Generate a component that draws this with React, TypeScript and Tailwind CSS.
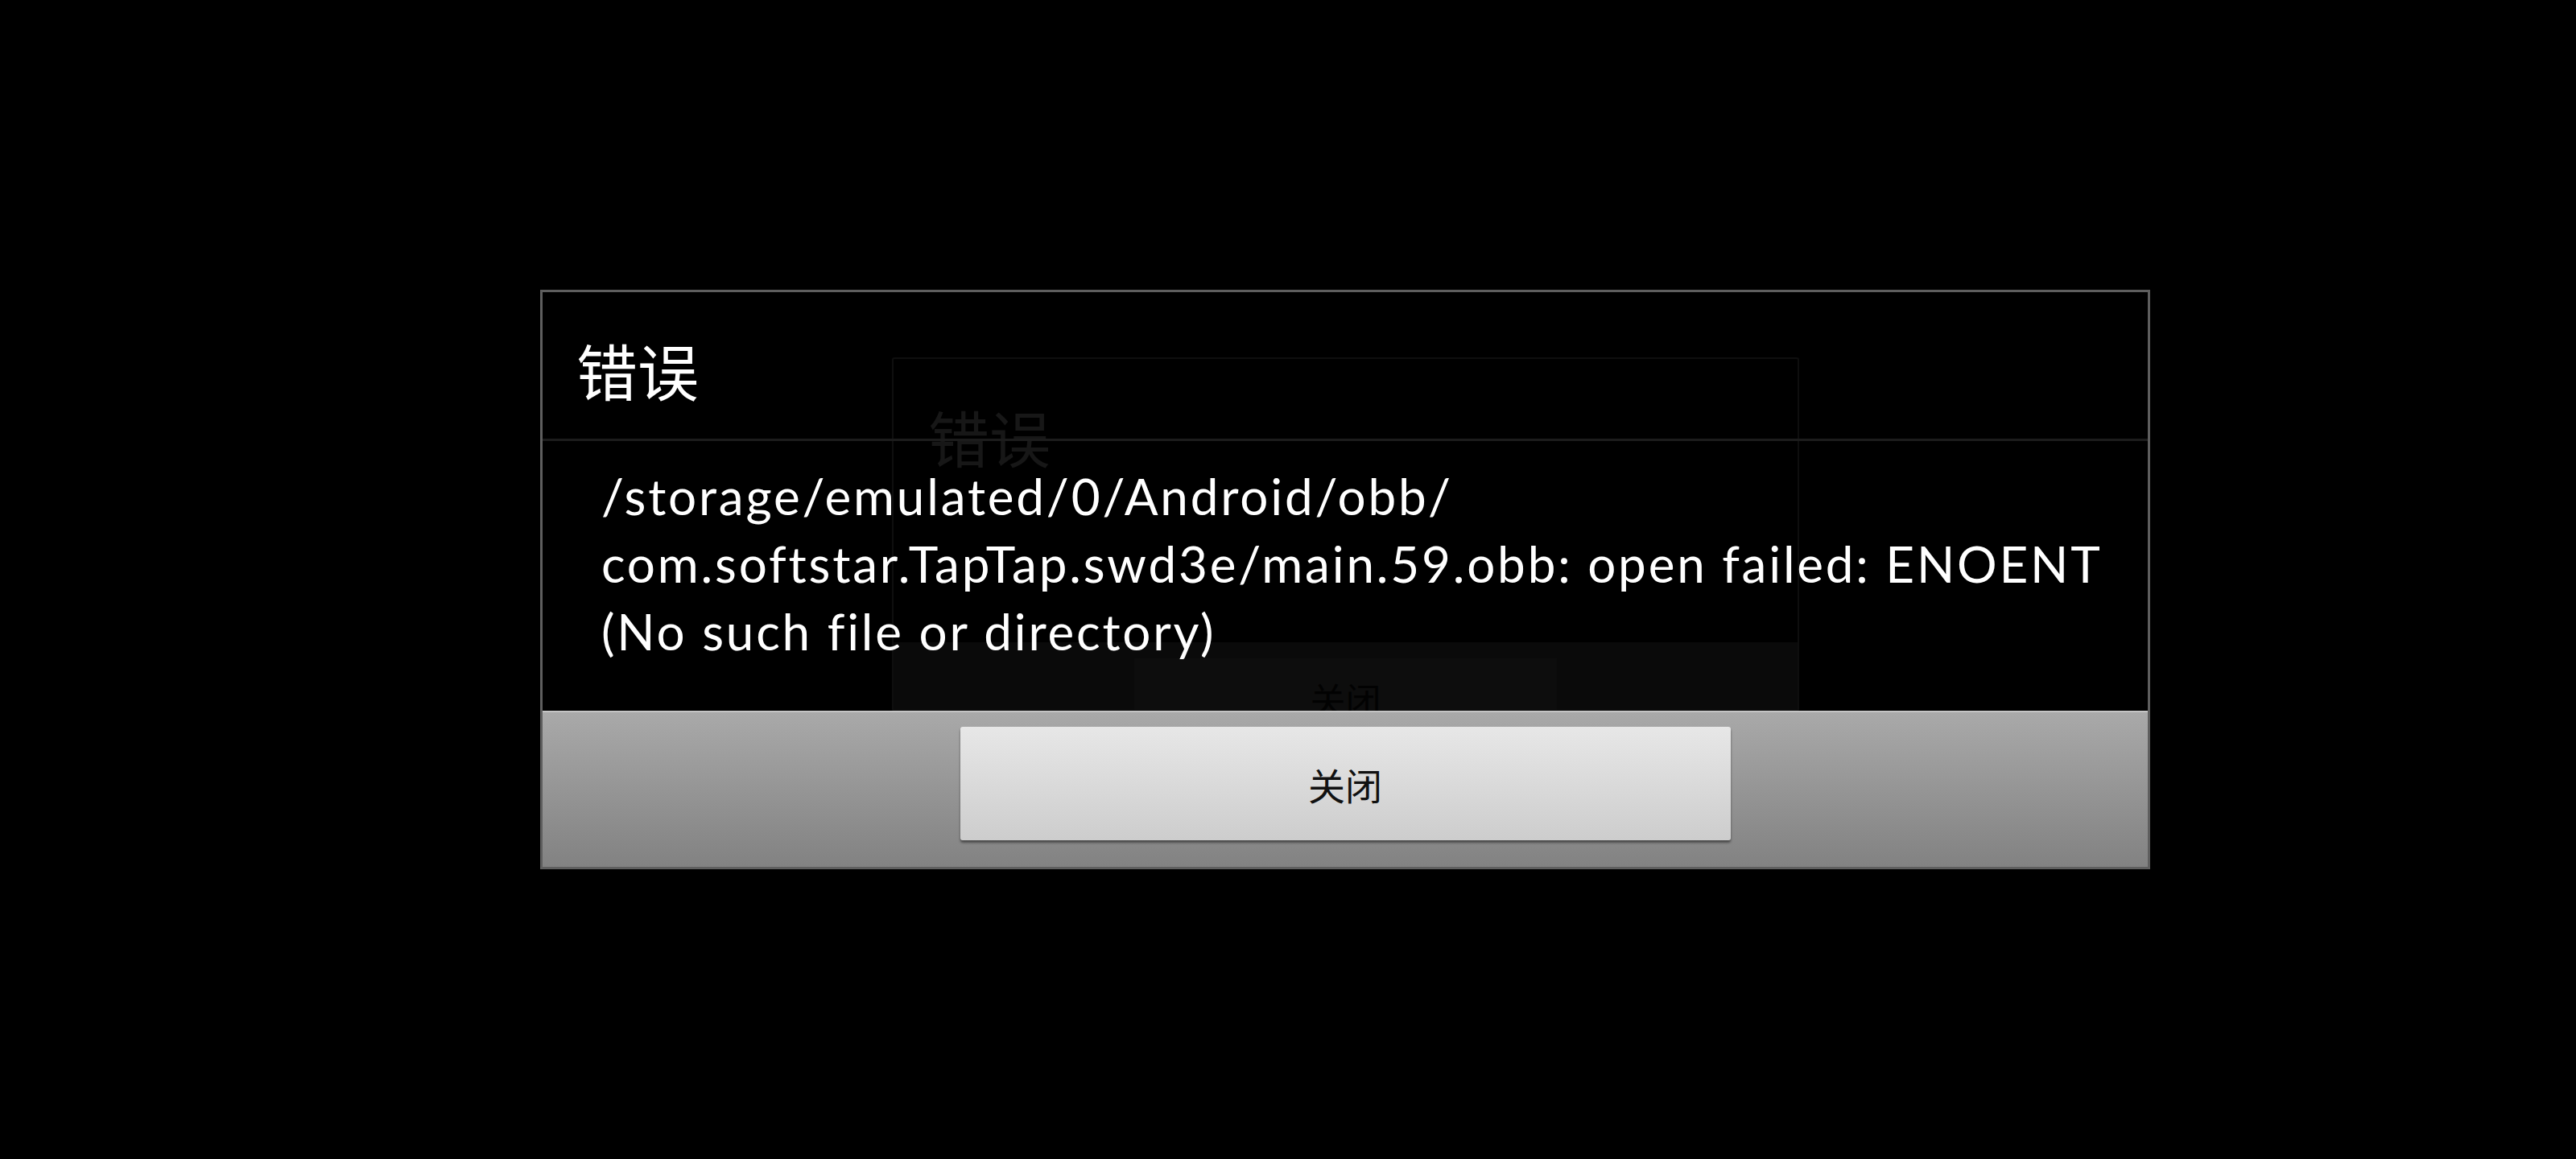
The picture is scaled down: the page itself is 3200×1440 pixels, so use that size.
export default function App() {
  return (
    <div className="flex h-[1440px] w-[3200px] items-center justify-center bg-black pl-[142px] font-['Lato','Noto_Sans_CJK_SC',sans-serif]">
      <div className="relative flex h-[720px] w-[2000px] flex-col border-[3px] border-[#5e5e5e] bg-black">
        {/* faded dialog left over behind the current one */}
        <div className="absolute left-[434px] top-[81px] h-[440px] w-[1127px] rounded-[3px] border-2 border-[#0e0e0e]">
          <div className="pl-[43px] pt-[58px] font-['Noto_Sans_CJK_SC',sans-serif] text-[76px] leading-[1] text-[#171717]">
            错误
          </div>
          <div className="absolute bottom-0 left-0 right-0 flex h-[84px] justify-center bg-[#0a0a0a] pt-[20px]">
            <div className="flex h-full w-[525px] items-start justify-center bg-[#0d0d0d] pt-[28px] font-['Noto_Sans_CJK_SC',sans-serif] text-[44px] leading-[1] text-[#020202]">
              关闭
            </div>
          </div>
        </div>

        <div className="relative flex h-[182px] items-center pl-[42px] pt-[10px] font-['Noto_Sans_CJK_SC',sans-serif] text-[76px] leading-[1] text-white">
          错误
        </div>
        <div className="relative h-[3px] bg-[#1c1c1c]" />
        <div className="relative flex-1 pl-[73px] pr-[10px] pt-[26px] text-[62px] leading-[84px] tracking-[2.8px] text-white [font-variant-ligatures:none]">
          <div>/storage/emulated/0/Android/obb/</div>
          <div>com.softstar.TapTap.swd3e/main.59.obb: open failed: ENOENT</div>
          <div>(No such file or directory)</div>
        </div>
        <div className="relative flex h-[194px] justify-center border-t-2 border-[#c4c4c4] bg-gradient-to-b from-[#a9a9a9] to-[#828282] pt-[18px]">
          <div className="flex h-[141px] w-[957px] items-center justify-center rounded-[3px] bg-gradient-to-b from-[#e7e7e7] to-[#cdcdcd] font-['Noto_Sans_CJK_SC',sans-serif] text-[46px] leading-[1] tracking-normal text-[#111111] shadow-[0_3px_3px_rgba(0,0,0,0.45)]">
            关闭
          </div>
        </div>
      </div>
    </div>
  );
}
